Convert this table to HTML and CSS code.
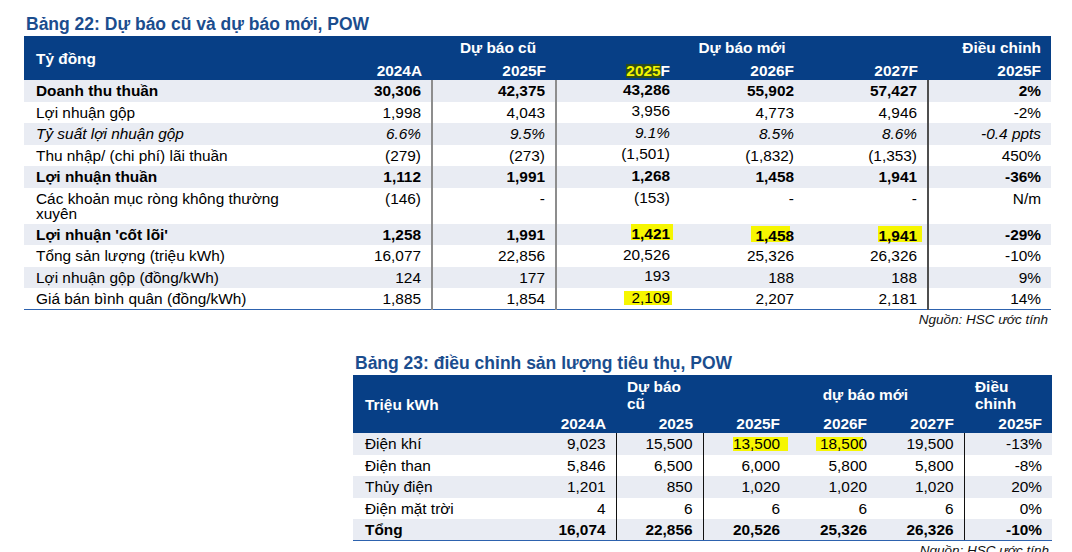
FILE: index.html
```html
<!DOCTYPE html>
<html lang="vi">
<head>
<meta charset="utf-8">
<title>POW – Dự báo</title>
<link rel="stylesheet" href="styles.css">
</head>
<body>
<section class="block block-1">
  <h2 class="title">Bảng 22: Dự báo cũ và dự báo mới, POW</h2>
  <table class="tbl tbl-1">
    <colgroup>
      <col class="c1-label"><col class="c1-num"><col class="c1-num"><col class="c1-num"><col class="c1-num"><col class="c1-num"><col class="c1-last">
    </colgroup>
    <thead>
      <tr class="h-top">
        <th rowspan="2" class="lbl">Tỷ đồng</th>
        <th></th>
        <th class="ctr shift-r">Dự báo cũ</th>
        <th></th>
        <th class="ctr">Dự báo mới</th>
        <th></th>
        <th>Điều chỉnh</th>
      </tr>
      <tr class="h-bot">
        <th>2024A</th>
        <th>2025F</th>
        <th><span class="hl-head">2025</span>F</th>
        <th>2026F</th>
        <th>2027F</th>
        <th>2025F</th>
      </tr>
    </thead>
    <tbody>
      <tr class="g b">
        <td class="lbl">Doanh thu thuần</td><td class="sep">30,306</td><td class="sep">42,375</td><td class="up">43,286</td><td>55,902</td><td class="sep-d">57,427</td><td>2%</td>
      </tr>
      <tr>
        <td class="lbl">Lợi nhuận gộp</td><td class="sep">1,998</td><td class="sep">4,043</td><td class="up">3,956</td><td>4,773</td><td class="sep-d">4,946</td><td>-2%</td>
      </tr>
      <tr class="g i">
        <td class="lbl">Tỷ suất lợi nhuận gộp</td><td class="sep">6.6%</td><td class="sep">9.5%</td><td class="up">9.1%</td><td>8.5%</td><td class="sep-d">8.6%</td><td>-0.4 ppts</td>
      </tr>
      <tr>
        <td class="lbl">Thu nhập/ (chi phí) lãi thuần</td><td class="sep">(279)</td><td class="sep">(273)</td><td class="up">(1,501)</td><td>(1,832)</td><td class="sep-d">(1,353)</td><td>450%</td>
      </tr>
      <tr class="g b">
        <td class="lbl">Lợi nhuận thuần</td><td class="sep">1,112</td><td class="sep">1,991</td><td class="up">1,268</td><td>1,458</td><td class="sep-d">1,941</td><td>-36%</td>
      </tr>
      <tr class="tall">
        <td class="lbl wrap">Các khoản mục ròng không thường xuyên</td><td class="sep">(146)</td><td class="sep">-</td><td class="up">(153)</td><td>-</td><td class="sep-d">-</td><td>N/m</td>
      </tr>
      <tr class="g b">
        <td class="lbl">Lợi nhuận 'cốt lõi'</td><td class="sep">1,258</td><td class="sep">1,991</td><td class="up"><span class="hl hl-tall hl-r3">1,421</span></td><td><span class="hl hl-tall hl-cut4">1,458</span></td><td class="sep-d"><span class="hl hl-tall hl-r5">1,941</span></td><td>-29%</td>
      </tr>
      <tr>
        <td class="lbl">Tổng sản lượng (triệu kWh)</td><td class="sep">16,077</td><td class="sep">22,856</td><td class="up">20,526</td><td>25,326</td><td class="sep-d">26,326</td><td>-10%</td>
      </tr>
      <tr class="g">
        <td class="lbl">Lợi nhuận gộp (đồng/kWh)</td><td class="sep">124</td><td class="sep">177</td><td class="up">193</td><td>188</td><td class="sep-d">188</td><td>9%</td>
      </tr>
      <tr class="last">
        <td class="lbl">Giá bán bình quân (đồng/kWh)</td><td class="sep">1,885</td><td class="sep">1,854</td><td class="up"><span class="hl hl-l7">2,109</span></td><td>2,207</td><td class="sep-d">2,181</td><td>14%</td>
      </tr>
    </tbody>
  </table>
  <p class="source">Nguồn: HSC ước tính</p>
</section>

<section class="block block-2">
  <h2 class="title">Bảng 23: điều chỉnh sản lượng tiêu thụ, POW</h2>
  <table class="tbl tbl-2">
    <colgroup>
      <col class="c2-label"><col class="c2-num"><col class="c2-num"><col class="c2-num"><col class="c2-num"><col class="c2-num"><col class="c2-last">
    </colgroup>
    <thead>
      <tr class="h-top">
        <th rowspan="2" class="lbl">Triệu kWh</th>
        <th></th>
        <th class="wrap">Dự báo cũ</th>
        <th colspan="3" class="span-new">dự báo mới</th>
        <th class="wrap">Điều chỉnh</th>
      </tr>
      <tr class="h-bot">
        <th>2024A</th>
        <th>2025</th>
        <th>2025F</th>
        <th>2026F</th>
        <th>2027F</th>
        <th>2025F</th>
      </tr>
    </thead>
    <tbody>
      <tr class="g">
        <td class="lbl">Điện khí</td><td class="sep2">9,023</td><td class="sep2">15,500</td><td><span class="hl hl-r8">13,500</span></td><td><span class="hl hl-cut4 hl-l2">18,500</span></td><td class="sep2">19,500</td><td>-13%</td>
      </tr>
      <tr>
        <td class="lbl">Điện than</td><td class="sep2">5,846</td><td class="sep2">6,500</td><td>6,000</td><td>5,800</td><td class="sep2">5,800</td><td>-8%</td>
      </tr>
      <tr class="g">
        <td class="lbl">Thủy điện</td><td class="sep2">1,201</td><td class="sep2">850</td><td>1,020</td><td>1,020</td><td class="sep2">1,020</td><td>20%</td>
      </tr>
      <tr>
        <td class="lbl">Điện mặt trời</td><td class="sep2">4</td><td class="sep2">6</td><td>6</td><td>6</td><td class="sep2">6</td><td>0%</td>
      </tr>
      <tr class="g b last">
        <td class="lbl">Tổng</td><td class="sep2">16,074</td><td class="sep2">22,856</td><td>20,526</td><td>25,326</td><td class="sep2">26,326</td><td>-10%</td>
      </tr>
    </tbody>
  </table>
  <p class="source">Nguồn: HSC ước tính</p>
</section>
</body>
</html>
```

FILE: styles.css
```css
* { box-sizing: border-box; }

html, body {
  margin: 0;
  padding: 0;
  background: #ffffff;
}

body {
  width: 1072px;
  height: 552px;
  overflow: hidden;
  font-family: "Liberation Sans", Arial, sans-serif;
  color: #000;
}

.block-1 {
  padding-left: 24px;
  width: 1051px;
}

.block-2 {
  padding-left: 353px;
  width: 1052px;
}

.title {
  margin: 0;
  padding: 14px 0 2px 2px;
  font-size: 17.5px;
  line-height: 20px;
  font-weight: 700;
  color: #1b4d8e;
  white-space: nowrap;
}

.block-2 .title {
  padding-top: 25px;
}

.tbl {
  border-collapse: collapse;
  table-layout: fixed;
  font-size: 15.4px;
  line-height: 15px;
}

.tbl-1 { width: 1027px; }
.tbl-2 { width: 699px; }

.c1-label { width: 284px; }
.c1-num { width: 124px; }
.c1-last { width: 123px; }

.c2-label { width: 176px; }
.c2-num { width: 87px; }
.c2-last { width: 88px; }

.tbl th,
.tbl td {
  padding: 0 10px 0 12px;
  white-space: nowrap;
  text-align: right;
  vertical-align: middle;
}

.tbl thead tr {
  background: #073f86;
  color: #fff;
}

.tbl th {
  font-weight: 700;
}

.tbl .lbl {
  text-align: left;
}

.tbl-1 .h-top { height: 22px; }
.tbl-1 .h-bot { height: 22px; }
.tbl-1 .h-bot th {
  vertical-align: bottom;
  padding-bottom: 2px;
}

.tbl-1 .ctr {
  text-align: center;
  padding: 0;
}

.tbl-1 .shift-r {
  padding-left: 8px;
}

.hl-head {
  display: inline-block;
  line-height: 14px;
  background: #2f4d18;
  color: #f4f400;
}

.tbl-1 tbody tr { height: 21.5px; }

.tbl tbody tr.g { background: #e9ecf3; }
.tbl tbody tr.b td { font-weight: 700; }
.tbl tbody tr.i td { font-style: italic; }

.tbl-1 tbody td.up {
  padding-bottom: 3px;
}

.tbl-1 tbody tr.tall { height: 36px; }
.tbl-1 tbody tr.tall td {
  vertical-align: top;
  padding-top: 3px;
}
.tbl-1 tbody tr.tall td.up { padding-top: 2px; }

.tbl .wrap {
  white-space: normal;
}

.tbl-1 .sep { border-right: 2px solid #8d8d8d; }
.tbl-1 .sep-d { border-right: 2px solid #4f4f4f; }

.tbl tbody tr.last td {
  border-bottom: 1px solid #2d62ae;
}

/* table 2 */
.tbl-2 .h-top { height: 39px; }
.tbl-2 .h-bot { height: 19px; }

.tbl-2 .h-top th.wrap {
  text-align: left;
  line-height: 17px;
  padding: 0 4px 0 11px;
}

.tbl-2 .h-top th.span-new {
  padding-right: 56px;
}

.tbl-2 tbody tr { height: 21.6px; }

.tbl-2 .sep2 { border-right: 1px solid #111; }

/* highlights */
.hl {
  display: inline-block;
  line-height: 14px;
  background: #f6f600;
}

.hl-tall {
  line-height: 13px;
  padding-top: 3px;
}

.hl-r3 { padding-right: 3px; margin-right: -3px; }
.hl-r5 { padding-right: 5px; margin-right: -5px; }
.hl-r8 { padding-right: 8px; margin-right: -8px; }
.hl-l7 { padding-left: 7px; padding-right: 2px; margin-right: -2px; }
.hl-l2 { padding-left: 2px; }

.hl-cut4 {
  padding-left: 4px;
  background: linear-gradient(#f6f600, #f6f600) no-repeat left top / calc(100% - 4px) 100%;
}

.source {
  margin: 2px 3px 0 0;
  text-align: right;
  font-style: italic;
  font-size: 13.5px;
  line-height: 16px;
  color: #111;
}
```
